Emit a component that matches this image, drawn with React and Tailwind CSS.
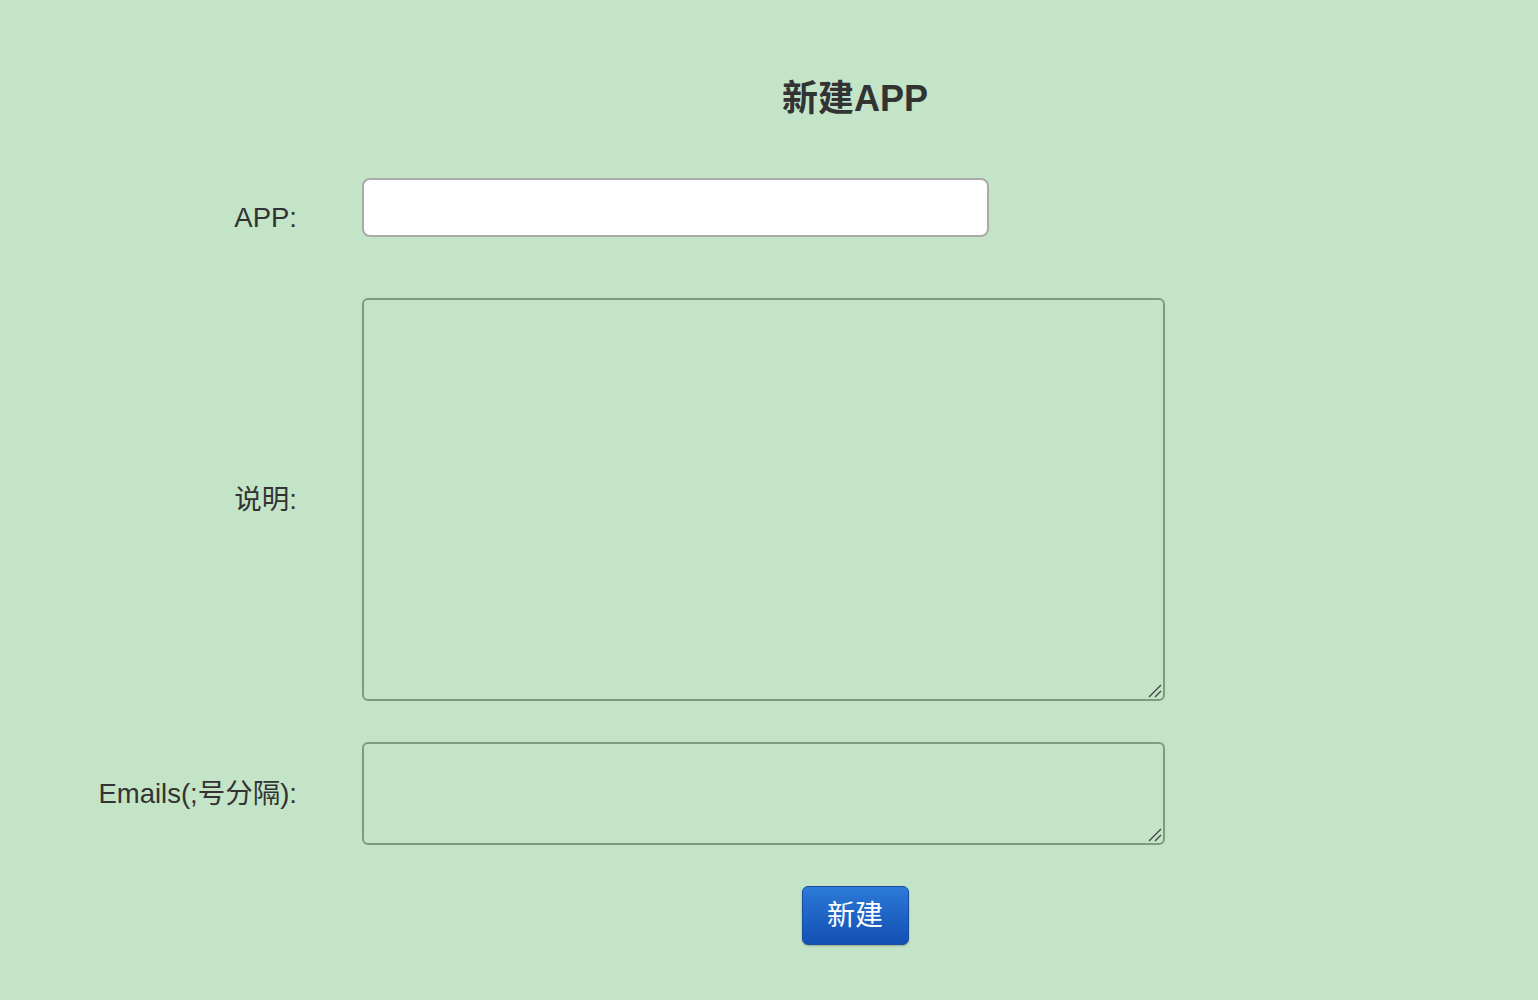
function Grip() {
  return (
    <svg className="pointer-events-none absolute bottom-[3px] right-[3px]" width="14" height="14" viewBox="0 0 14 14">
      <line x1="1" y1="13" x2="13" y2="1" stroke="#4a4a4a" strokeWidth="1.4" />
      <line x1="7" y1="13" x2="13" y2="7" stroke="#4a4a4a" strokeWidth="1.4" />
    </svg>
  );
}

export default function App() {
  const font = { fontFamily: '"Liberation Sans", "Noto Sans CJK SC", sans-serif' };
  return (
    <div className="min-h-[1000px] w-full overflow-hidden bg-[#c4e4c7] text-[#333]" style={font}>
      <div className="pt-[79px]">
        <h1 className="h-[40px] pl-[172px] text-center text-[36px] font-bold leading-[40px] text-[#333]">新建APP</h1>

        <div className="mt-[59px] flex items-start">
          <label className="mt-[24px] w-[297px] text-right text-[27.5px] leading-[32px]">APP:</label>
          <input
            type="text"
            className="ml-[65px] h-[59px] w-[627px] rounded-[8px] border-2 border-[#a8aba8] bg-white px-3 text-[24px] outline-none"
          />
        </div>

        <div className="mt-[61px] flex items-center">
          <label className="w-[297px] text-right text-[27.5px] leading-[32px]">说明:</label>
          <div className="relative ml-[65px]">
            <textarea className="block h-[403px] w-[803px] resize-none rounded-[6px] border-2 border-[#7d9c7e] bg-transparent p-2 text-[20px] outline-none" />
            <Grip />
          </div>
        </div>

        <div className="mt-[41px] flex items-center">
          <label className="w-[297px] text-right text-[27.5px] leading-[32px]">Emails(;号分隔):</label>
          <div className="relative ml-[65px]">
            <textarea className="block h-[103px] w-[803px] resize-none rounded-[6px] border-2 border-[#7d9c7e] bg-transparent p-2 text-[20px] outline-none" />
            <Grip />
          </div>
        </div>

        <div className="mt-[41px] flex justify-center pl-[172px]">
          <button className="h-[59px] w-[107px] rounded-[6px] border border-[#1a4d9e] bg-gradient-to-b from-[#2c7ad8] to-[#134fb3] text-[28px] leading-[32px] text-white shadow-[0_1px_2px_rgba(0,0,0,0.25)]">
            新建
          </button>
        </div>
      </div>
    </div>
  );
}
